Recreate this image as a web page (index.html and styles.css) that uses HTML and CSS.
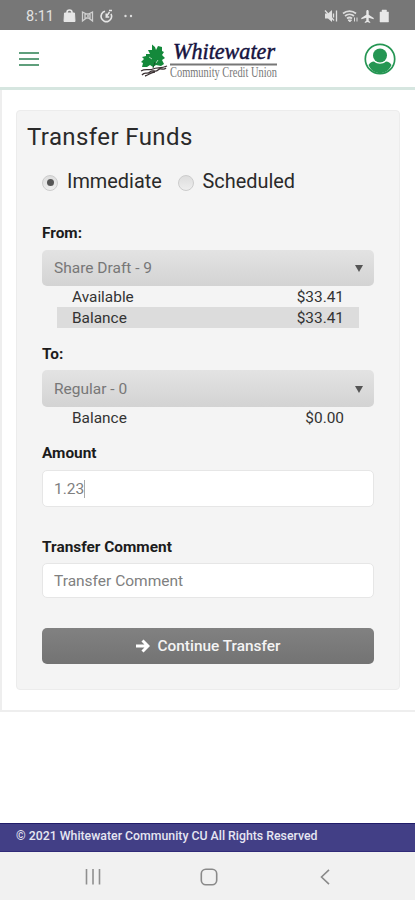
FILE: index.html
```html
<!DOCTYPE html>
<html lang="en">
<head>
  <meta charset="UTF-8">
  <meta name="viewport" content="width=device-width, initial-scale=1.0">
  <title>Transfer Funds</title>
  <link rel="stylesheet" href="styles.css">
</head>
<body>
  <div class="status-bar">
    <span class="time">8:11</span>
    <svg class="status-left" width="72" height="16" viewBox="0 0 72 16">
      <path d="M1.500 5h10l.5 8.500H1z" fill="#e6e6e6" stroke="#e6e6e6" stroke-linejoin="round"/>
      <path d="M4 6V4.500a2.500 2.500 0 0 1 5 0V6" fill="none" stroke="#e6e6e6" stroke-width="1.600"/>
      <path d="M19.500 4l4 2h2l4-2v9l-4-3h-2l-4 3zM22 6v5M27 6v5M24 8h2" fill="none" stroke="#d0d0d0" stroke-width="1.300"/>
      <path d="M42 3.200a5.300 5.300 0 1 0 6 2.600" fill="none" stroke="#e6e6e6" stroke-width="1.600"/>
      <path d="M43 9l3.500-5M43.200 5.500V9h3M46 2.500h3" fill="none" stroke="#e6e6e6" stroke-width="1.400"/>
      <circle cx="62.500" cy="8" r="1.200" fill="#ddd"/>
      <circle cx="68" cy="8" r="1.200" fill="#ddd"/>
    </svg>
    <svg class="status-right" width="68" height="16" viewBox="0 0 68 16">
      <path d="M1 5.500h3l4-3.500v12l-4-3.500H1z" fill="#e0e0e0"/>
      <path d="M1 2.500l9 10M9.500 5.500v4M12.500 2.500v11" stroke="#e0e0e0" stroke-width="1.300" fill="none"/>
      <path d="M19 5.500a10 10 0 0 1 13 0M21 8a7 7 0 0 1 9 0M23 10.500a4 4 0 0 1 5 0" fill="none" stroke="#dcdcdc" stroke-width="1.700"/>
      <path d="M24 12h3.500l-1.700 2zM30.500 9.500v4M33 9.500v4" fill="#dcdcdc" stroke="#dcdcdc"/>
      <path d="M43.500 2c.8 0 1.200.6 1.200 1.500v3.200l5 3.200v1.300l-5-1.500v3l1.500 1.200v1l-2.700-.8-2.700.8v-1l1.500-1.200v-3l-5 1.500V9.900l5-3.200V3.500c0-.9.400-1.500 1.200-1.500z" fill="#e8e8e8"/>
      <path d="M56 4h2V2h4.500v2h2v10H56z" fill="#e8e8e8" stroke="#e8e8e8" stroke-width=".5" stroke-linejoin="round"/>
    </svg>
  </div>

  <div class="header">
    <div class="menu-toggle">
      <span></span>
      <span></span>
      <span></span>
    </div>
    <svg class="logo" width="140" height="48" viewBox="0 0 140 48">
      <path d="M14 9.500l3 2.500 1 3 2-4 4 1 0 4 2 1-2 3 3 3-3 2 2 4-3 2-5-1-3 2-3-2-3 2-5 0 1-4-2-1 3-3-2-2 4-1 0-2 4 0-2-4 4 0z" fill="#14893b"/>
      <path d="M11 22l3 2M20 25l-2 3" stroke="#cfe8d6" stroke-width=".8"/>
      <path d="M15 33l2-6" stroke="#15552a" stroke-width="1" fill="none"/>
      <path d="M3 36c5-3 8 0 12-2s8 0 14-3M4 40c3-4 5 0 8-3s5 1 8-2 5 1 8-2M7 41c4-1 6-4 10-4" stroke="#3a3032" stroke-width="1.300" fill="none"/>
      <text class="logo-name" x="35" y="23.500" textLength="102" lengthAdjust="spacingAndGlyphs">Whitewater</text>
      <path d="M32 29.500h107" stroke="#777" stroke-width="1.800"/>
      <text class="logo-sub" x="32" y="42" textLength="107" lengthAdjust="spacingAndGlyphs">Community Credit Union</text>
    </svg>
    <svg class="avatar" width="32" height="32" viewBox="0 0 32 32">
      <circle cx="16" cy="16" r="14.700" fill="#fff" stroke="#259653" stroke-width="1.700"/>
      <circle cx="16" cy="12.500" r="7" fill="#259653"/>
      <path d="M4.500 22c1.500-2.300 3-3.200 5.500-3.500 3.500 3 8.500 3 12 0 2.500.3 4 1.200 5.500 3.500C25 28 20.500 30 16 30S7 28 4.500 22z" fill="#259653"/>
    </svg>
  </div>

  <div class="main">
    <div class="panel">
      <div class="title"><span>Transfer Funds</span></div>
      <div class="radios">
        <span class="radio checked"></span>
        <span class="radio-label immediate">Immediate</span>
        <span class="radio"></span>
        <span class="radio-label scheduled">Scheduled</span>
      </div>

      <div class="label from"><span>From:</span></div>
      <div class="select"><span>Share Draft - 9</span><i class="caret"></i></div>
      <div class="row"><span>Available</span><span>$33.41</span></div>
      <div class="row shaded"><span>Balance</span><span>$33.41</span></div>

      <div class="label to"><span>To:</span></div>
      <div class="select select-to"><span>Regular - 0</span><i class="caret"></i></div>
      <div class="row"><span>Balance</span><span>$0.00</span></div>

      <div class="label amount"><span>Amount</span></div>
      <div class="input"><span>1.23</span><i class="cursor"></i></div>

      <div class="label comment"><span>Transfer Comment</span></div>
      <div class="input input-comment"><span>Transfer Comment</span></div>

      <div class="button">
        <svg width="14" height="14" viewBox="0 0 14 14">
          <path d="M0 7h11M6.500 1.500L12 7l-5.500 5.500" fill="none" stroke="#fff" stroke-width="3"/>
        </svg>
        <span>Continue Transfer</span>
      </div>
    </div>
  </div>

  <div class="footer"><span>© 2021 Whitewater Community CU All Rights Reserved</span></div>

  <div class="nav-bar">
    <svg width="16" height="16" viewBox="0 0 16 16"><path d="M1.500 0v15.500M8 0v15.500M14.500 0v15.500" stroke="#8f8f8f" stroke-width="1.600"/></svg>
    <svg width="18" height="18" viewBox="0 0 18 18"><rect x="1.300" y="1.300" width="15.400" height="15.400" rx="4.500" fill="none" stroke="#8a8a8a" stroke-width="1.600"/></svg>
    <svg class="back" width="10" height="16" viewBox="0 0 10 16"><path d="M9 .8L1.500 8 9 15.200" fill="none" stroke="#8a8a8a" stroke-width="1.600"/></svg>
  </div>
</body>
</html>
```

FILE: styles.css
```css
* {
  box-sizing: border-box;
}

body {
  margin: 0;
  height: 900px;
  display: flex;
  flex-direction: column;
  background: #fff;
  font-family: Roboto, "Liberation Sans", sans-serif;
  color: #2a2a2a;
  overflow: hidden;
}

.status-bar {
  height: 30px;
  background: #777;
  display: flex;
  align-items: center;
  padding: 2px 23px 0 26px;
}

.time {
  width: 37px;
  font-size: 14.5px;
  color: #e2e2e2;
  white-space: nowrap;
}

.status-right {
  margin-left: auto;
}

/* Header */
.header {
  height: 60px;
  border-bottom: 3px solid #d6e6e0;
  display: flex;
  align-items: center;
  padding: 0 19px;
}

.menu-toggle {
  width: 20px;
  display: flex;
  flex-direction: column;
  gap: 4px;
}

.menu-toggle span {
  height: 2px;
  background: #5f9f7c;
}

.logo {
  margin-left: 99px;
  overflow: visible;
}

.logo-name {
  font: italic 24px "Liberation Serif", serif;
  fill: #16133f;
  stroke: #16133f;
  stroke-width: 0.5px;
}

.logo-sub {
  font: 14px/1 "Liberation Serif", serif;
  fill: #777;
}

.avatar {
  margin-left: auto;
}

/* Transfer form */
.main {
  border-left: 2px solid #eee;
  border-bottom: 2px solid #eee;
  padding: 20px 15px 20px 14px;
}

.panel {
  height: 580px;
  padding: 0 25px;
  background: #f4f4f4;
  border: 1px solid #ececec;
  border-radius: 4px;
}

.title {
  height: 52px;
  line-height: 52px;
  margin-left: -15px;
  font-size: 24px;
  letter-spacing: 0.4px;
}

.radios {
  height: 36px;
  display: flex;
  align-items: center;
}

.radio {
  width: 16px;
  height: 16px;
  margin-top: 3px;
  border: 1px solid #ccc;
  border-radius: 50%;
  background: linear-gradient(#ddd, #eee);
  display: flex;
  align-items: center;
  justify-content: center;
}

.checked::after {
  content: "";
  width: 7px;
  height: 7px;
  border-radius: 50%;
  background: #555;
}

.radio-label {
  margin-left: 9px;
  font-size: 19.9px;
}

.immediate {
  width: 110.5px;
}

.label {
  height: 24px;
  line-height: 25px;
  font-size: 15.4px;
  font-weight: bold;
  color: #1c1c1c;
}

.from {
  margin-top: 22px;
}

.to {
  margin-top: 14px;
}

.amount {
  margin-top: 13px;
}

.comment {
  margin-top: 28px;
}

.select {
  height: 36px;
  margin-top: 5px;
  padding: 0 11px 0 12px;
  display: flex;
  align-items: center;
  justify-content: space-between;
  background: linear-gradient(#e3e3e3, #d3d3d3);
  border-radius: 5px;
  font-size: 15.5px;
  color: #777;
}

.select-to {
  height: 37px;
  margin-top: 4px;
}

.caret {
  margin-top: 1px;
  border-left: 4.5px solid transparent;
  border-right: 4.5px solid transparent;
  border-top: 7px solid #555;
}

.row {
  height: 21px;
  margin: 0 15px;
  padding: 0 15px;
  display: flex;
  align-items: center;
  justify-content: space-between;
  font-size: 15.4px;
  color: #333;
}

.shaded {
  background: #dcdcdc;
}

.input {
  height: 37px;
  margin-top: 5px;
  padding: 0 11px;
  display: flex;
  align-items: center;
  background: #fff;
  border: 1px solid #e6e6e6;
  border-radius: 5px;
  font-size: 15.5px;
  color: #808080;
}

.input-comment {
  height: 35px;
  margin-top: 4px;
}

.cursor {
  width: 1px;
  height: 18px;
  background: #aaa;
}

.button {
  height: 36px;
  margin-top: 30px;
  display: flex;
  align-items: center;
  justify-content: center;
  gap: 8px;
  background: linear-gradient(#818181, #737373);
  border-radius: 5px;
  font-size: 15.4px;
  font-weight: 500;
  color: #f4f4f4;
}

/* Bottom */
.footer {
  height: 29px;
  margin-top: auto;
  padding-left: 16px;
  line-height: 24px;
  background: #423f86;
  border-top: 1px solid #211c69;
  border-bottom: 1px solid #302b78;
  font-size: 12.3px;
  font-weight: 500;
  color: #e6e6f2;
}

.nav-bar {
  height: 48px;
  padding: 2px 0 0 85px;
  background: #f1f1f1;
  display: flex;
  align-items: center;
  gap: 99px;
}

.back {
  margin-left: 3px;
}
```
